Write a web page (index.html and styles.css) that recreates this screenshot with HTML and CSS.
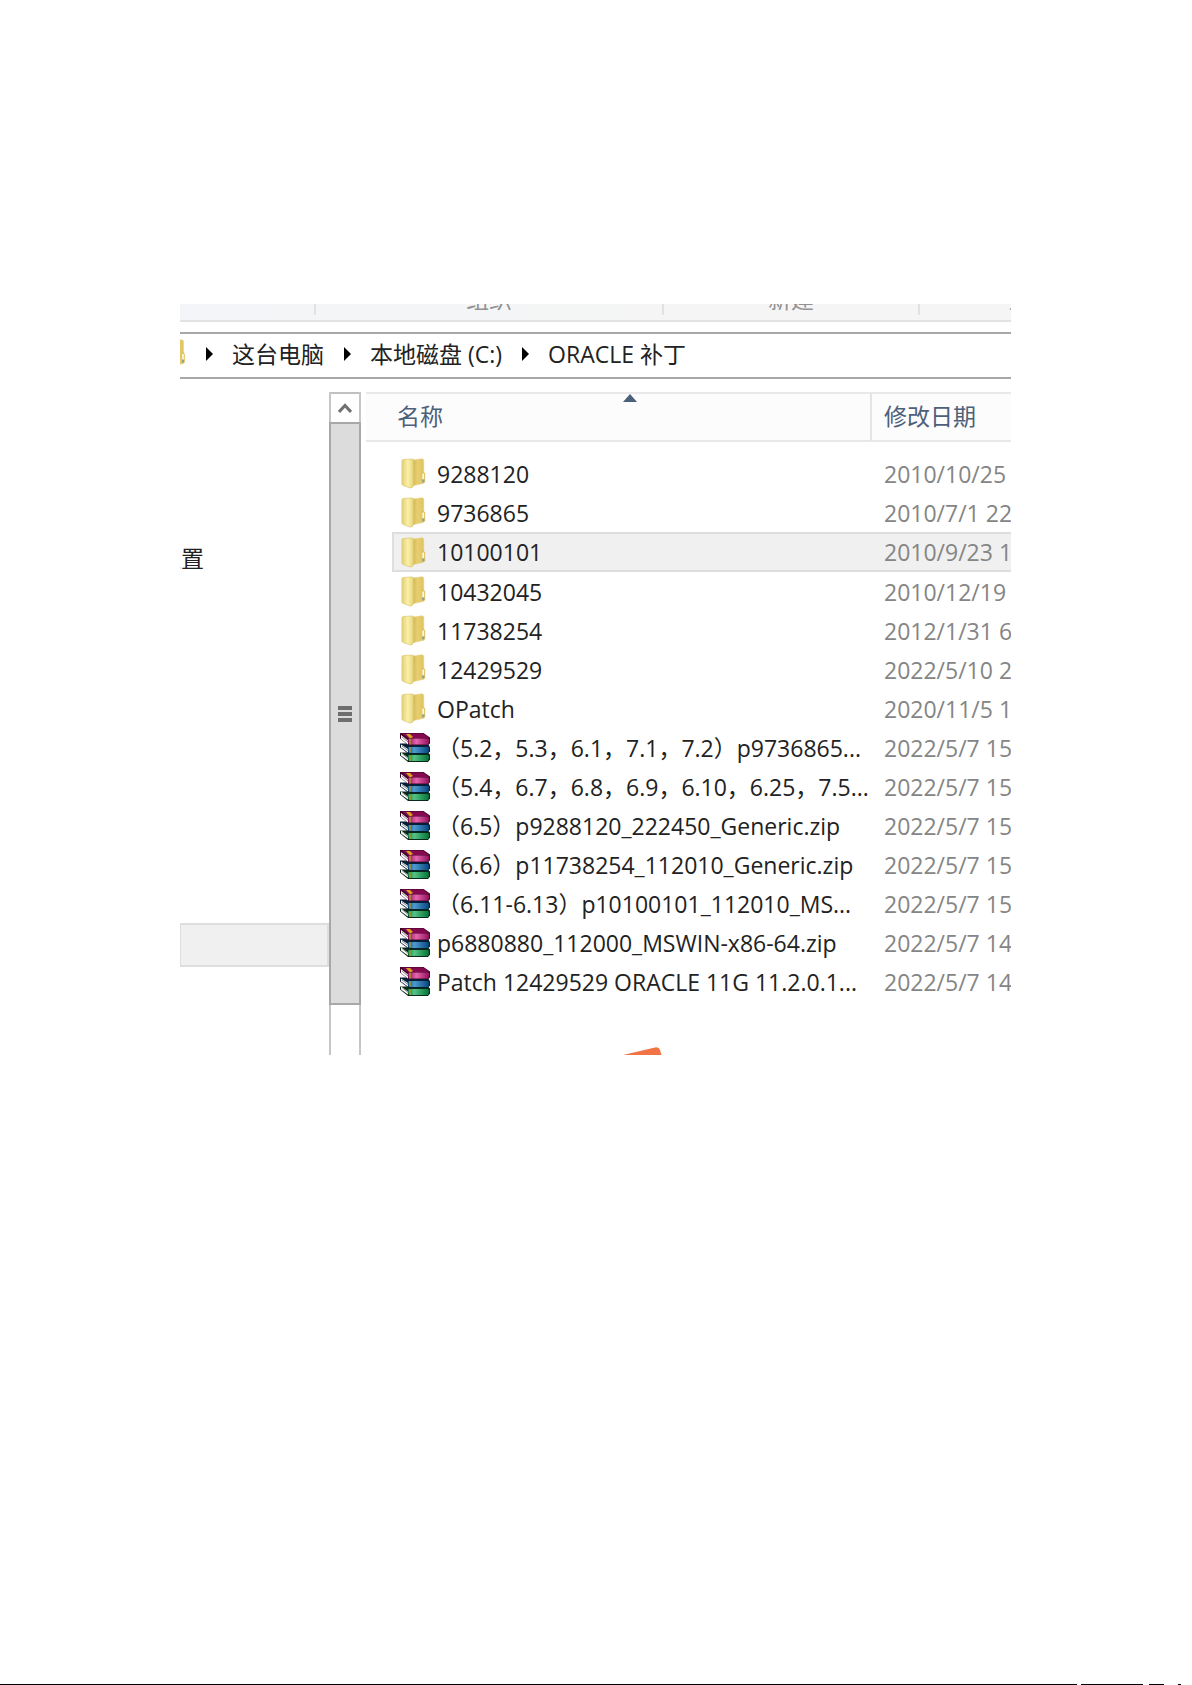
FILE: index.html
```html
<!DOCTYPE html>
<html lang="zh-CN">
<head>
<meta charset="utf-8">
<title>ORACLE 补丁</title>
<link rel="stylesheet" href="styles.css">
</head>
<body>
<svg class="defs" aria-hidden="true">
  <linearGradient id="flap" x1="0" x2="1"><stop offset="0" stop-color="#e3cf73"/><stop offset=".45" stop-color="#faf0ab"/><stop offset=".8" stop-color="#ead981"/><stop offset="1" stop-color="#c9a843"/></linearGradient>
  <linearGradient id="back" x1="0" x2="1"><stop offset="0" stop-color="#cfae4c"/><stop offset=".5" stop-color="#e8ce70"/><stop offset="1" stop-color="#e0c462"/></linearGradient>
  <linearGradient id="red" x1="0" x2="1"><stop offset="0" stop-color="#8b0c56"/><stop offset=".4" stop-color="#e565ae"/><stop offset="1" stop-color="#90105a"/></linearGradient>
  <linearGradient id="blue" x1="0" x2="1"><stop offset="0" stop-color="#0b4a86"/><stop offset=".3" stop-color="#4d9bd0"/><stop offset="1" stop-color="#08457f"/></linearGradient>
  <linearGradient id="green" x1="0" x2="1"><stop offset="0" stop-color="#08763c"/><stop offset=".3" stop-color="#54c486"/><stop offset="1" stop-color="#077236"/></linearGradient>
  <symbol id="folder" viewBox="0 0 30 32">
    <path d="M11 2.500L22 .8Q24 .8 24 3V26L11 29Z" fill="url(#back)" stroke="#e2cc7a" stroke-width=".6"/>
    <path d="M22.500 13L25.500 16V25L22.500 26Z" fill="#dcc15d"/>
    <path d="M23.500 16V23" stroke="#fff9dc" stroke-width="1.800"/>
    <path d="M23.500 22V25" stroke="#8aa596" stroke-width="2.200"/>
    <path d="M1.500 3Q1.500 1.500 3.500 1.500L12 1Q14.500 1.500 15 4L14 27Q13 31 10 31L3 28.500Q1.500 28 1.500 27Z" fill="url(#flap)" stroke="#dcc66c" stroke-width=".7"/>
  </symbol>
  <symbol id="books" viewBox="0 0 30 30">
    <path d="M0 20L8 20 28 20 30 22V27L28 29.500H8L0 23Z" fill="#092a1b"/>
    <path d="M1 20L8 25V28L1 23Z" fill="#fff"/><path d="M2 21L8 26" stroke="#888"/>
    <path d="M8 22.500H28Q30 24 28 28.500H9Q7 25 8 22.500Z" fill="url(#green)"/>
    <path d="M0 11H28L30 15V19L28 21H8L0 15Z" fill="#081d36"/>
    <path d="M1 12L8 16.500V20L1 15Z" fill="#fff"/><path d="M2 13.500L8 18" stroke="#888"/>
    <path d="M8 14.500H28Q30 17 28 20.500H9Q7 17 8 14.500Z" fill="url(#blue)"/>
    <path d="M0 .5H23.500L30 5V11L28 12.500H8L0 6Z" fill="#43052c"/>
    <path d="M2 1H23L29 5.500H8Z" fill="#85094f"/>
    <path d="M1 2.500L8 8V12L1 6.500Z" fill="#fff"/><path d="M2 4.500L8 9.500" stroke="#888"/>
    <path d="M8 6H28.500Q30 8 28 12H9Q7 9 8 6Z" fill="url(#red)"/>
    <path d="M6 1.500L10 1.500L13 4.500L10 6Z" fill="#d9a31c"/>
    <path d="M10 6.500V12M10 14.500V20M10 23V28.500" stroke="#a89a2c" stroke-width="1.500"/>
  </symbol>
</svg>

<main class="page">
  <section class="explorer">
    <div class="ribbon">
      <div class="group group-blank"></div>
      <div class="group group-organize"><span>组织</span></div>
      <div class="group group-new"><span>新建</span></div>
      <div class="group group-open"><span>打开</span></div>
    </div>

    <nav class="address" aria-label="地址">
      <div class="folder-slot"><svg><use href="#folder"/></svg></div>
      <svg class="arrow" viewBox="0 0 7 14"><path d="M0 0L7 7 0 14Z"/></svg>
      <a href="#">这台电脑</a>
      <svg class="arrow" viewBox="0 0 7 14"><path d="M0 0L7 7 0 14Z"/></svg>
      <a href="#">本地磁盘 (C:)</a>
      <svg class="arrow" viewBox="0 0 7 14"><path d="M0 0L7 7 0 14Z"/></svg>
      <a href="#">ORACLE 补丁</a>
    </nav>

    <div class="panes">
      <aside class="tree">
        <a class="tree-link" href="#">位置</a>
        <div class="tree-selected"></div>
      </aside>
      <div class="scrollbar">
        <button class="scroll-up" aria-label="向上滚动"><svg viewBox="0 0 14 10"><path d="M1 9L7 2.500 13 9"/></svg></button>
        <div class="thumb"><i></i><i></i><i></i></div>
        <div class="track"></div>
      </div>
      <div class="files">
        <table>
          <colgroup><col><col class="col-date"></colgroup>
          <thead>
            <tr><th class="sorted">名称<svg class="sort" viewBox="0 0 14 8"><path d="M0 8L7 0 14 8Z"/></svg></th><th>修改日期</th></tr>
          </thead>
          <tbody>
            <tr><td><div class="file"><svg><use href="#folder"/></svg><span>9288120</span></div></td><td>2010/10/25</td></tr>
            <tr><td><div class="file"><svg><use href="#folder"/></svg><span>9736865</span></div></td><td>2010/7/1 22</td></tr>
            <tr class="selected"><td><div class="file"><svg><use href="#folder"/></svg><span>10100101</span></div></td><td>2010/9/23 1</td></tr>
            <tr><td><div class="file"><svg><use href="#folder"/></svg><span>10432045</span></div></td><td>2010/12/19</td></tr>
            <tr><td><div class="file"><svg><use href="#folder"/></svg><span>11738254</span></div></td><td>2012/1/31 6</td></tr>
            <tr><td><div class="file"><svg><use href="#folder"/></svg><span>12429529</span></div></td><td>2022/5/10 2</td></tr>
            <tr><td><div class="file"><svg><use href="#folder"/></svg><span>OPatch</span></div></td><td>2020/11/5 1</td></tr>
            <tr><td><div class="file"><svg><use href="#books"/></svg><span>（5.2，5.3，6.1，7.1，7.2）p9736865...</span></div></td><td>2022/5/7 15</td></tr>
            <tr><td><div class="file"><svg><use href="#books"/></svg><span>（5.4，6.7，6.8，6.9，6.10，6.25，7.5...</span></div></td><td>2022/5/7 15</td></tr>
            <tr><td><div class="file"><svg><use href="#books"/></svg><span>（6.5）p9288120_222450_Generic.zip</span></div></td><td>2022/5/7 15</td></tr>
            <tr><td><div class="file"><svg><use href="#books"/></svg><span>（6.6）p11738254_112010_Generic.zip</span></div></td><td>2022/5/7 15</td></tr>
            <tr><td><div class="file"><svg><use href="#books"/></svg><span>（6.11-6.13）p10100101_112010_MS...</span></div></td><td>2022/5/7 15</td></tr>
            <tr><td><div class="file"><svg><use href="#books"/></svg><span>p6880880_112000_MSWIN-x86-64.zip</span></div></td><td>2022/5/7 14</td></tr>
            <tr><td><div class="file"><svg><use href="#books"/></svg><span>Patch 12429529 ORACLE 11G 11.2.0.1...</span></div></td><td>2022/5/7 14</td></tr>
          </tbody>
        </table>
        <svg class="mark" viewBox="0 0 39 8"><path d="M0 8L33 .3Q36 0 37 3L38.500 8Z"/></svg>
      </div>
    </div>
  </section>
  <div class="page-edge"></div>
</main>
</body>
</html>
```
FILE: styles.css
```css
* { box-sizing: border-box; }

body {
  margin: 0;
  background: #fff;
  color: #222;
  font: 23px/30px "Open Sans", "Noto Sans CJK SC", sans-serif;
}

a { color: inherit; text-decoration: none; }

.defs { position: absolute; width: 0; height: 0; }

.page {
  display: flex;
  flex-direction: column;
  min-height: 100vh;
}

.explorer {
  margin: 304px 181px auto 180px;
  overflow: hidden;
}

/* Ribbon */
.ribbon {
  display: flex;
  height: 18px;
  overflow: hidden;
  background: linear-gradient(90deg, #f3f5f8, #f5f5f5 60%);
  border-bottom: 2px solid #e1e2e3;
  color: #929292;
}
.group {
  display: flex;
  flex: none;
  align-items: flex-end;
  justify-content: center;
  height: 11px;
  padding-bottom: 1px;
  border-right: 2px solid #e1e2e4;
  white-space: nowrap;
}
.group-blank { width: 136px; }
.group-organize { width: 348px; }
.group-new { width: 256px; }
.group-open {
  flex: 1;
  justify-content: flex-start;
  min-width: 0;
  padding-left: 88px;
  border: 0;
}

/* Address bar */
.address {
  display: flex;
  align-items: center;
  gap: 20px;
  height: 47px;
  margin-top: 10px;
  padding-bottom: 4px;
  border: solid #a8a8a8;
  border-width: 2px 0;
  white-space: nowrap;
}
.address a { margin-left: -1px; }
.folder-slot {
  display: flex;
  justify-content: flex-end;
  width: 6px;
  overflow: hidden;
}
.folder-slot svg { flex: none; width: 30px; height: 30px; margin-right: -4px; }
.arrow { width: 7px; height: 14px; fill: #000; }

/* Panes */
.panes { display: flex; margin-top: 13px; }

.tree { width: 149px; }
.tree-link {
  display: flex;
  justify-content: flex-end;
  width: 24px;
  margin-top: 151px;
  overflow: hidden;
  white-space: nowrap;
}
.tree-selected {
  height: 44px;
  margin-top: 350px;
  background: #f0f0f0;
  border: 2px solid #dedede;
  border-left-width: 1px;
}

.scrollbar {
  display: flex;
  flex-direction: column;
  width: 32px;
  border: solid #c6c6c6;
  border-width: 0 2px;
}
.scroll-up {
  height: 30px;
  padding: 0;
  background: #fff;
  border: 0;
  border-top: 2px solid #c0c0c0;
}
.scroll-up svg { display: block; width: 14px; height: 10px; margin: 0 auto; }
.scroll-up path { fill: none; stroke: #707070; stroke-width: 3; }
.thumb {
  flex: 583;
  display: flex;
  flex-direction: column;
  align-items: center;
  justify-content: center;
  gap: 2px;
  margin: 0 -2px;
  background: #dcdcdc;
  border: 2px solid #a8a8a8;
}
.thumb i { width: 14px; height: 4px; background: #6e6e6e; }
.track { flex: 50; }

/* File list */
.files {
  position: relative;
  flex: 1;
  min-width: 0;
  padding: 0 0 54px 5px;
}
table {
  width: 100%;
  height: 609px;
  table-layout: fixed;
  border-collapse: separate;
  border-spacing: 0;
}
.col-date { width: 139px; }
th {
  height: 50px;
  padding: 0 0 2px 12px;
  background: #fcfcfc;
  border: solid #e8e8e8;
  border-width: 2px 0;
  color: #4c607a;
  font-weight: 400;
  text-align: left;
  white-space: nowrap;
}
.sorted {
  position: relative;
  padding-left: 31px;
  border-right: 2px solid #e4e4e4;
}
.sort {
  position: absolute;
  top: 0;
  left: 51%;
  width: 14px;
  height: 8px;
  fill: #4c607a;
}
tbody::before { content: ""; display: block; height: 9px; }
td {
  height: 39px;
  padding: 0;
  white-space: nowrap;
}
td:last-child { padding-left: 12px; color: #858585; overflow: hidden; }
.file {
  display: flex;
  align-items: center;
  gap: 7px;
  height: 39px;
  margin-left: 26px;
  padding-left: 8px;
}
.file svg { flex: none; width: 30px; height: 31px; }
.selected .file {
  height: 40px;
  padding-left: 6px;
  background: #f0f0f0;
  border: 2px solid #dedede;
  border-right: 0;
}
.selected td:last-child {
  background: #f0f0f0;
  border: solid #dedede;
  border-width: 2px 0;
}
.mark {
  position: absolute;
  bottom: 0;
  left: 40%;
  width: 39px;
  height: 8px;
  margin-left: 2px;
  fill: #f17446;
}

/* Broken rule along the foot of the page */
.page-edge {
  height: 1px;
  background: linear-gradient(90deg, #000 calc(100% - 115px), #fff 0 calc(100% - 111px), #000 0 calc(100% - 49px), #fff 0 calc(100% - 43px), #000 0 calc(100% - 28px), #fff 0 calc(100% - 14px), #000 0 calc(100% - 11px), #fff 0);
}
```
